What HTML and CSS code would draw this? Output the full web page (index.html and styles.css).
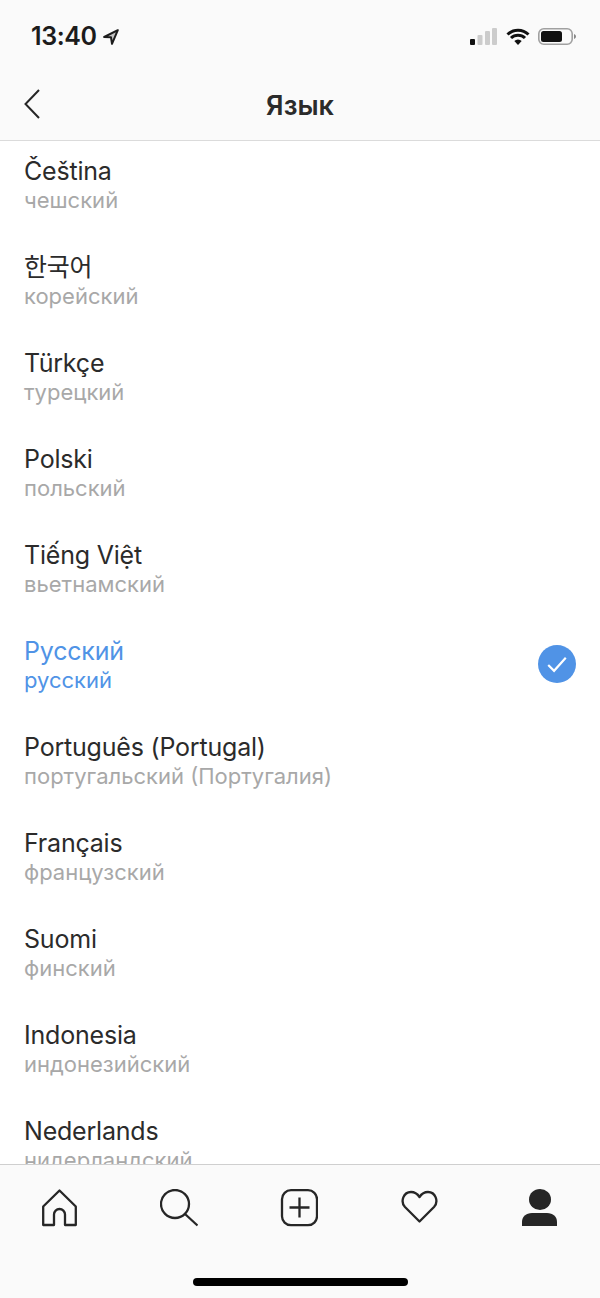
FILE: index.html
```html
<!DOCTYPE html>
<html lang="ru">
<head>
	<meta charset="UTF-8">
	<title>Язык</title>
	<link rel="stylesheet" href="styles.css">
</head>
<body>
	<div class="phone">
		<div class="status">
			<div class="clock">
				<span class="time">13:40</span>
				<svg class="arrow" width="16" height="16" viewBox="0 0 16 16"><path d="M14.800 1.200 1.200 8 8 8.300 9 14.800Z" fill="#1c1c1c" fill-opacity=".25" stroke="#1c1c1c" stroke-width="2" stroke-linejoin="round"/></svg>
			</div>
			<div class="indicators">
				<svg width="28" height="18" viewBox="0 0 28 18">
					<rect x="0" y="11" width="5" height="6" rx="1" fill="#111"/>
					<rect x="7.500" y="7" width="5" height="10" rx="1" fill="#ccc"/>
					<rect x="15" y="3" width="5" height="14" rx="1" fill="#ccc"/>
					<rect x="22" y="0" width="5" height="17" rx="1" fill="#ccc"/>
				</svg>
				<svg width="24" height="18" viewBox="0 0 24 18">
					<path d="M1.500 6.500a15 15 0 0 1 21 0M5 10a10 10 0 0 1 14 0" fill="none" stroke="#111" stroke-width="3"/>
					<path d="M8.300 13a5.200 5.200 0 0 1 7.400 0L12 17Z" fill="#111"/>
				</svg>
				<svg width="38" height="18" viewBox="0 0 38 18">
					<rect x="0.800" y="0.800" width="33.400" height="15.400" rx="5" fill="none" stroke="#a0a0a0" stroke-width="1.600"/>
					<rect x="3" y="3" width="21" height="11" rx="2.500" fill="#111"/>
					<path d="M36 6c1.200.4 2 1.300 2 2.500s-.8 2.100-2 2.500Z" fill="#888"/>
				</svg>
			</div>
		</div>
		<div class="header">
			<svg class="back" width="16" height="30" viewBox="0 0 16 30"><path d="M15 1 1.500 15 15 29" fill="none" stroke="#262626" stroke-width="2"/></svg>
			<h1 class="title">Язык</h1>
		</div>
		<ul class="langs">
			<li class="lang"><div><div class="name">Čeština</div><div class="sub">чешский</div></div></li>
			<li class="lang"><div><div class="name">한국어</div><div class="sub">корейский</div></div></li>
			<li class="lang"><div><div class="name">Türkçe</div><div class="sub">турецкий</div></div></li>
			<li class="lang"><div><div class="name">Polski</div><div class="sub">польский</div></div></li>
			<li class="lang"><div><div class="name">Tiếng Việt</div><div class="sub">вьетнамский</div></div></li>
			<li class="lang on">
				<div><div class="name">Русский</div><div class="sub">русский</div></div>
				<svg class="check" width="38" height="38" viewBox="0 0 39 39">
					<circle cx="19.500" cy="19.500" r="19.500" fill="#5093e6"/>
					<path d="M10.500 20.500 16.500 26.500 28.500 13" fill="none" stroke="#fff" stroke-width="2.200"/>
				</svg>
			</li>
			<li class="lang"><div><div class="name">Português (Portugal)</div><div class="sub">португальский (Португалия)</div></div></li>
			<li class="lang"><div><div class="name">Français</div><div class="sub">французский</div></div></li>
			<li class="lang"><div><div class="name">Suomi</div><div class="sub">финский</div></div></li>
			<li class="lang"><div><div class="name">Indonesia</div><div class="sub">индонезийский</div></div></li>
			<li class="lang"><div><div class="name">Nederlands</div><div class="sub">нидерландский</div></div></li>
		</ul>
		<div class="tabbar">
			<div class="tabs">
				<div class="tab">
					<svg width="38" height="38" viewBox="0 0 38 38"><path d="M3.200 36V17.500L19.500 1.500 35.800 17.500V36H25V25.500a5.500 5.500 0 0 0-11 0V36Z" fill="none" stroke="#262626" stroke-width="2.300" stroke-linejoin="round"/></svg>
				</div>
				<div class="tab">
					<svg width="38" height="38" viewBox="0 0 38 38"><circle cx="15" cy="15" r="14" fill="none" stroke="#262626" stroke-width="2.300"/><path d="M25 25 37.500 36.500" stroke="#262626" stroke-width="2.300"/></svg>
				</div>
				<div class="tab">
					<svg width="38" height="38" viewBox="0 0 38 38"><rect x="2" y="1.200" width="35" height="35" rx="9" fill="none" stroke="#262626" stroke-width="2.300"/><path d="M19.500 8.500V28.500M9.500 18.500H29.500" stroke="#262626" stroke-width="2.300"/></svg>
				</div>
				<div class="tab">
					<svg width="38" height="38" viewBox="0 0 38 38"><path d="M19.500 32.500 5 18C0 12.500 3.500 3 11 3 14.500 3 17.500 5 19.500 8 21.500 5 24.500 3 28 3 35.500 3 39 12.500 34 18Z" fill="none" stroke="#262626" stroke-width="2.300" stroke-linejoin="round"/></svg>
				</div>
				<div class="tab">
					<svg width="38" height="38" viewBox="0 0 38 38"><ellipse cx="20" cy="10.500" rx="11" ry="10.500" fill="#262626"/><path d="M2 37V33C2 27.500 6 24 12 24H27C33 24 37 27.500 37 33V37Z" fill="#262626"/></svg>
				</div>
			</div>
			<div class="homebar"></div>
		</div>
	</div>
</body>
</html>
```

FILE: styles.css
```css
* {
	margin: 0;
	padding: 0;
	box-sizing: border-box;
	list-style: none;
}
body {
	background: #fff;
	overflow: hidden;
	font-family: Inter, "Noto Sans CJK KR", sans-serif;
	color: #2b2b2b;
}
.phone {
	width: 600px;
	height: 1298px;
	display: flex;
	flex-direction: column;
}
.status {
	height: 72px;
	padding: 22px 24px 0 31px;
	background: #fafafa;
	display: flex;
	justify-content: space-between;
	align-items: flex-start;
}
.clock {
	display: flex;
	align-items: center;
	gap: 6px;
}
.time {
	font-size: 25px;
	line-height: 29px;
	font-weight: 600;
	letter-spacing: -0.4px;
	color: #1c1c1c;
}
.indicators {
	display: flex;
	gap: 8px;
	padding-top: 6px;
}
.header {
	height: 69px;
	padding: 17px 0 0 24px;
	background: #fafafa;
	border-bottom: 1px solid #dbdbdb;
	position: relative;
}
.back {
	display: block;
}
.title {
	position: absolute;
	left: 0;
	right: 0;
	top: 19px;
	text-align: center;
	font-size: 27px;
	line-height: 30px;
	font-weight: 600;
}
.langs {
	flex: 1;
	min-height: 0;
	overflow: hidden;
}
.lang {
	height: 96px;
	padding: 15px 24px 23px 24px;
	display: flex;
	justify-content: space-between;
	align-items: center;
}
.name {
	font-size: 25px;
	line-height: 30px;
	letter-spacing: -0.2px;
}
.sub {
	font-size: 22px;
	line-height: 28px;
	color: #a8a8a8;
}
.check {
	margin-top: -2px;
}
.on .name,
.on .sub {
	color: #5093e6;
}
.tabbar {
	height: 134px;
	background: #fafafa;
	border-top: 1px solid #cfcfcf;
	padding-top: 24px;
}
.tabs {
	display: flex;
	margin-left: -1px;
}
.tab {
	width: 120px;
	display: flex;
	justify-content: center;
}
.homebar {
	width: 215px;
	height: 8px;
	margin: 51px auto 0;
	border-radius: 4px;
	background: #000;
}
```
